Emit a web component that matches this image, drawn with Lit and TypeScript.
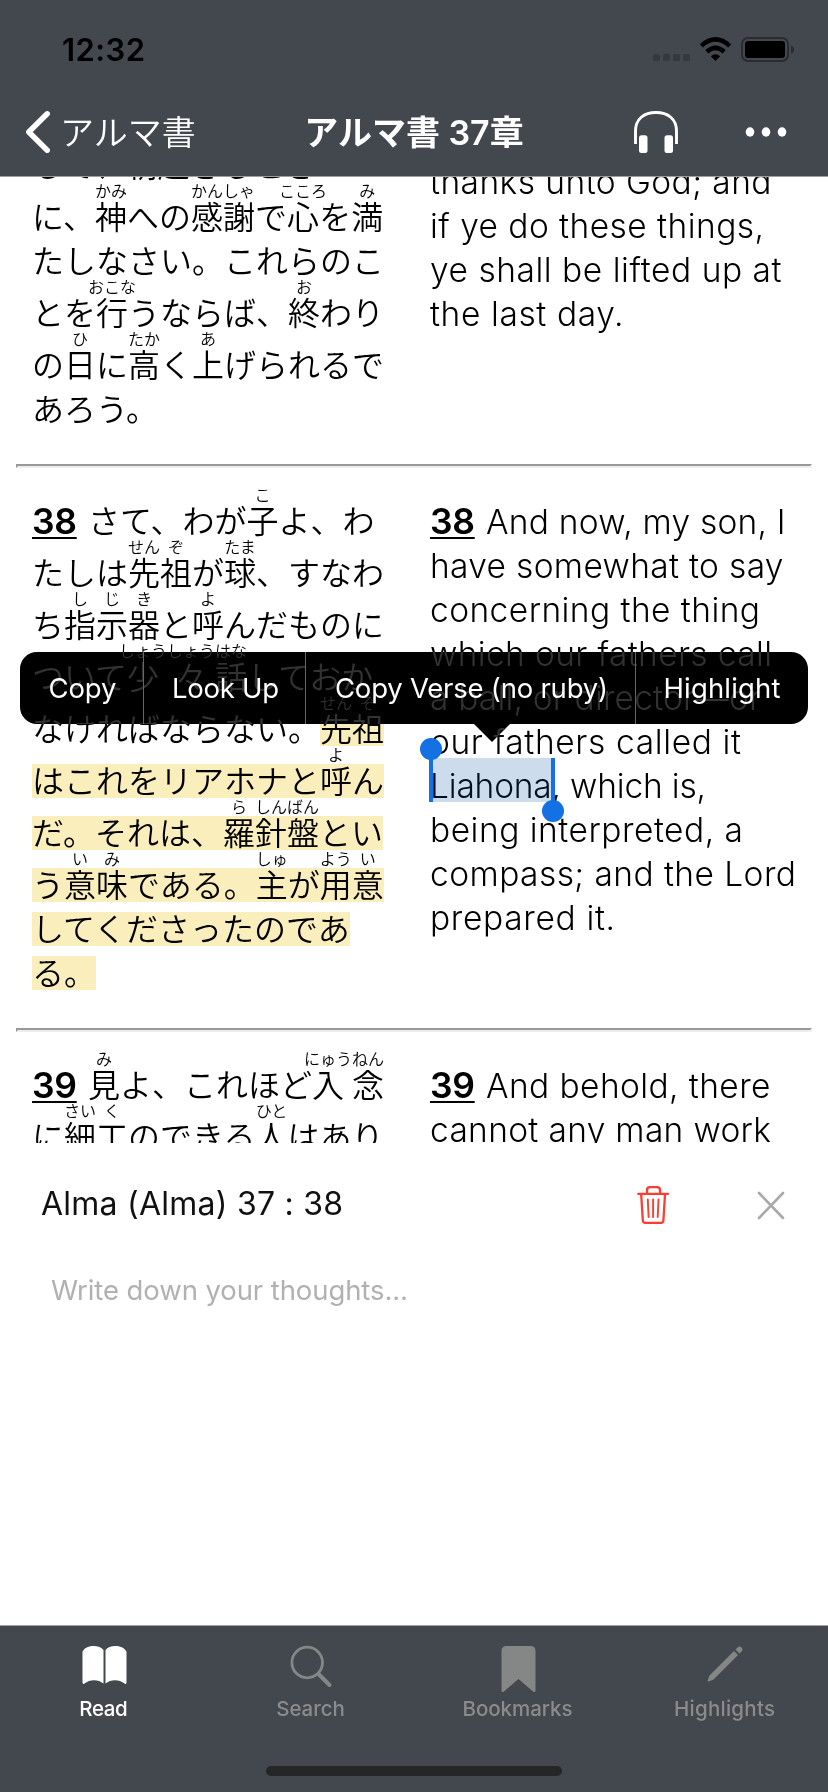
import { LitElement, html, css, svg, nothing } from "lit";
import { customElement, property, state } from "lit/decorators.js";
import { styleMap } from "lit/directives/style-map.js";
import { classMap } from "lit/directives/class-map.js";

/** One run of text tracked so that its advance equals a given measure. */
@customElement("tracked-text")
class TrackedText extends LitElement {
  @property() text = "";
  @property({ type: Number }) measure = 0;
  @state() private tracking = 0;

  static styles = css`
    :host { display: inline-block; white-space: pre; }
    .run { display: inline-block; }
  `;

  firstUpdated() {
    const run = this.renderRoot.querySelector(".run") as HTMLElement;
    const natural = run.getBoundingClientRect().width;
    this.tracking = (this.measure - natural) / Math.max(1, this.text.length - 1);
  }

  render() {
    return html`<span class="run" style=${styleMap({
      letterSpacing: `${this.tracking}px`,
      marginRight: `${-this.tracking}px`,
    })}>${this.text}</span>`;
  }
}

/** A segment of Japanese text: base, reading, and an optional wider cell. */
type Seg = { b: string; r?: string; wide?: "left" | "mid"; mark?: boolean };
type JpLine = { segs: Seg[]; plain?: boolean; num?: string };
type EnLine = { t: string; w: number; num?: string };
type Verse = { jp: JpLine[]; en: EnLine[]; offset?: boolean };

/** Parses "に、{神|かみ}へ" into segments. */
function line(src: string, opts: { plain?: boolean; num?: string; mark?: boolean } = {}): JpLine {
  const segs: Seg[] = [];
  let mark = !!opts.mark;
  for (const m of src.matchAll(/\{([^|}]+)\|([^|}]+)(?:\|(left|mid))?\}|(\[)|([^{}\[]+)/g)) {
    if (m[4]) mark = true;
    else if (m[1]) segs.push({ b: m[1], r: m[2], wide: m[3] as Seg["wide"], mark });
    else segs.push({ b: m[5], mark });
  }
  return { segs, plain: opts.plain, num: opts.num };
}

const VERSES: Verse[] = [
  {
    offset: true,
    jp: [
      line("して、朝起きるとき"),
      line("に、{神|かみ}への{感謝|かんしゃ}で{心|こころ}を{満|み}"),
      line("たしなさい。これらのこ", { plain: true }),
      line("とを{行|おこな}うならば、{終|お}わり"),
      line("の{日|ひ}に{高|たか}く{上|あ}げられるで"),
      line("あろう。", { plain: true }),
    ],
    en: [
      { t: "thanks unto God; and", w: 341.5 },
      { t: "if ye do these things,", w: 334 },
      { t: "ye shall be lifted up at", w: 351.5 },
      { t: "the last day.", w: 193.5 },
    ],
  },
  {
    jp: [
      line("さて、わが{子|こ}よ、わ", { num: "38" }),
      line("たしは{先|せん}{祖|ぞ}が{球|たま}、すなわ"),
      line("ち{指|し}{示|じ}{器|き}と{呼|よ}んだものに"),
      line("ついて{少|しょう|left}{々|しょう|mid}{話|はな}しておか"),
      line("なければならない。[{先|せん}{祖|ぞ}"),
      line("はこれをリアホナと{呼|よ}ん", { mark: true }),
      line("だ。それは、{羅|ら}{針盤|しんばん}とい", { mark: true }),
      line("う{意|い}{味|み}である。{主|しゅ}が{用|よう}{意|い}", { mark: true }),
      line("してくださったのであ", { plain: true, mark: true }),
      line("る。", { plain: true, mark: true }),
    ],
    en: [
      { t: "And now, my son, I", w: 299.5, num: "38" },
      { t: "have somewhat to say", w: 353.5 },
      { t: "concerning the thing", w: 330 },
      { t: "which our fathers call", w: 342 },
      { t: "a ball, or director—or", w: 331 },
      { t: "our fathers called it", w: 311 },
      { t: "Liahona, which is,", w: 276 },
      { t: "being interpreted, a", w: 313 },
      { t: "compass; and the Lord", w: 366 },
      { t: "prepared it.", w: 185 },
    ],
  },
  {
    jp: [
      line("{見|み}よ、これほど{入|にゅう|left}{念|ねん}", { num: "39" }),
      line("に{細|さい}{工|く}のできる{人|ひと}はあり"),
    ],
    en: [
      { t: "And behold, there", w: 284.5, num: "39" },
      { t: "cannot any man work", w: 341 },
    ],
  },
];

@customElement("verse-row")
class VerseRow extends LitElement {
  @property({ attribute: false }) verse!: Verse;

  static styles = css`
    :host { display: block; }
    .cols { display: grid; grid-template-columns: 398px 1fr; padding: 18px 0 38px 32px; color: #000; }
    .jp { font: 350 32px/30px "Noto Sans CJK JP", sans-serif; }
    .jline { display: flex; width: max-content; height: 52px; align-items: flex-end; }
    .jline.plain { height: 44px; }
    .seg { display: flex; flex-direction: column; align-items: center; width: max-content; }
    .base { height: 34px; white-space: pre; }
    .mark { background: #fbeebd; }
    .ruby { height: 18px; width: 0; display: flex; justify-content: center; white-space: pre; font-size: 16px; line-height: 16px; }
    .left { width: 40px; align-items: flex-start; }
    .left .ruby { width: 32px; }
    .mid { width: 48px; }
    .num { font: 600 35.5px/36px "Inter", sans-serif; width: 56px; height: 34px; }
    .num span, .en-num { text-decoration: underline; text-decoration-thickness: 2px; text-underline-offset: 3px; text-decoration-skip-ink: none; letter-spacing: -0.3px; }
    .num .digits { display: inline-block; line-height: 36px; }
    .en { padding-top: 14px; font: 300 33.5px/44px "Inter", sans-serif; }
    .en.offset { padding-top: 30px; }
    .eline { height: 44px; display: flex; align-items: baseline; white-space: pre; }
    .num-cell { width: 56px; }
    .en-num { font-weight: 600; font-size: 35.5px; }
    .rule { margin: 0 16px; height: 0; border: 2px solid; border-color: #999 #eee #eee #999; }
  `;

  render() {
    const v = this.verse;
    return html`
      <div class="cols">
        <div class="jp">
          ${v.jp.map((l) => html`<div class=${classMap({ jline: true, plain: !!l.plain })}>
            ${l.num ? html`<div class="num"><span class="digits">${l.num}</span></div>` : nothing}
            ${l.segs.map((s) => html`<div class=${classMap({ seg: true, left: s.wide === "left", mid: s.wide === "mid" })}>
              ${s.r ? html`<div class="ruby">${s.r}</div>` : nothing}
              <div class=${classMap({ base: true, mark: !!s.mark })}>${s.b}</div>
            </div>`)}
          </div>`)}
        </div>
        <div class=${classMap({ en: true, offset: !!v.offset })}>
          ${v.en.map((l) => html`<div class="eline">${l.num ? html`<div class="num-cell"><span class="en-num">${l.num}</span></div>` : nothing}<tracked-text .text=${l.t} .measure=${l.w}></tracked-text></div>`)}
        </div>
      </div>
      <div class="rule"></div>
    `;
  }
}

const ICONS = {
  read: svg`<path fill="#fff" d="M82 1651.500C86 1644.500 99 1644.500 103 1650V1683.500C98 1679 89 1679 84 1683.500Q82 1685 82 1682ZM105 1650C109 1644.500 122 1644.500 126 1651.500V1682Q126 1685 124 1683.500C119 1679 110 1679 105 1683.500Z"/>`,
  search: svg`<g fill="none" stroke="#858786"><circle cx="306.700" cy="1662.500" r="15.300" stroke-width="2.800"/><path d="M318 1674L329 1685" stroke-width="4" stroke-linecap="round"/></g>`,
  bookmarks: svg`<path fill="#858786" d="M501 1651Q501 1646 506 1646H530Q535 1646 535 1651V1690.500Q535 1693 532.500 1691.500L518 1679L503.500 1691.500Q501 1693 501 1690.500Z"/>`,
  highlights: svg`<path fill="#858786" d="M707 1681L709 1675.500L733.500 1651L737.500 1655L713 1679.500L708.500 1681.500ZM735 1649.500L737 1647.500Q739 1645.500 741 1647.500Q743 1649.500 741 1651.500L739 1653.500Z"/>`,
};

const TABS = [
  { id: "read", label: "Read", w: 48.5, box: "73.500 1640 60 56", on: true },
  { id: "search", label: "Search", w: 68.5, box: "280.500 1640 60 56" },
  { id: "bookmarks", label: "Bookmarks", w: 110, box: "487.500 1640 60 56" },
  { id: "highlights", label: "Highlights", w: 101, box: "694.500 1640 60 56" },
];

@customElement("app-root")
class AppRoot extends LitElement {
  static styles = css`
    :host { display: flex; flex-direction: column; width: 828px; height: 1792px; background: #fff; overflow: hidden; font-family: "Inter", sans-serif; }
    svg { display: block; }
    .head { height: 176px; flex: none; background: #43474e; border-bottom: 1px solid #9c9d9f; box-sizing: content-box; color: #fff; display: flex; flex-direction: column; }
    .status { height: 88px; display: flex; justify-content: space-between; align-items: center; padding: 12px 33px 0 62px; box-sizing: border-box; }
    .clock { color: #000; font-size: 31px; font-weight: 600; line-height: 40px; }
    .nav { height: 88px; display: grid; grid-template-columns: 224px 380px 224px; align-items: center; }
    .back { display: flex; align-items: center; padding-left: 24px; font: 350 34px/48px "Noto Sans CJK JP", sans-serif; gap: 8px; }
    .back span { margin-top: -2px; }
    .title { font: 600 34px/48px "Inter", "Noto Sans CJK JP", sans-serif; text-align: center; white-space: pre; padding-top: 1px; }
    .actions { display: flex; padding-left: 26px; gap: 63px; align-items: center; }
    .reader { height: 966px; flex: none; position: relative; overflow: hidden; }
    .scroll { margin-top: -65px; }
    .menu { position: absolute; left: 20px; top: 475px; width: 788px; height: 72px; border-radius: 17px; background: rgba(0,0,0,.01); backdrop-filter: grayscale(1) invert(1) brightness(.2); display: grid; grid-template-columns: 124px 162px 330px 1fr; color: #fff; font-size: 27.500px; font-weight: 400; }
    .item { display: flex; align-items: center; justify-content: center; border-right: 1px solid #666; padding-left: 2px; }
    .item:last-child { border: 0; padding-left: 0; }
    .tip { position: absolute; left: 474px; top: 547px; width: 36px; height: 18px; clip-path: polygon(0 0, 100% 0, 50% 100%); backdrop-filter: grayscale(1) invert(1) brightness(.2); }
    .sel { position: absolute; left: 431px; top: 581px; width: 122px; height: 44px; background: rgba(0, 82, 160, .2); }
    .grip { position: absolute; }
    .grip.start { left: 420px; top: 561px; }
    .grip.end { left: 542px; top: 581px; }
    .note { flex: 1; padding: 36px 43px 0 41px; }
    .note-head { display: flex; align-items: center; height: 52px; }
    .note-title { font-size: 32px; color: #111; flex: 1; line-height: 52px; margin-top: -2px; }
    .trash { margin-right: 87px; }
    .placeholder { margin: 39px 0 0 10px; font-size: 27.500px; line-height: 40px; color: #b1b1b1; }
    .tabs { height: 166px; flex: none; background: #43474e; border-top: 1px solid #a0a6a5; display: flex; flex-direction: column; align-items: center; }
    .row { display: grid; grid-template-columns: repeat(4, 207px); height: 140px; width: 828px; }
    .tab { display: flex; flex-direction: column; align-items: center; padding-top: 14px; color: #8b8b8c; font-size: 20.500px; font-weight: 500; line-height: 26px; }
    .tab.on { color: #fff; }
    .home { width: 296px; height: 10px; border-radius: 5px; background: #262626; }
  `;

  render() {
    return html`
      <header class="head">
        <div class="status">
          <span class="clock"><tracked-text .text=${"12:32"} .measure=${83}></tracked-text></span>
          <svg width="142" height="28" viewBox="653 36 142 28">
            <g fill="#35383d">
              <rect x="653" y="54" width="7" height="7" rx="2"/><rect x="663" y="54" width="7" height="7" rx="2"/>
              <rect x="673" y="54" width="7" height="7" rx="2"/><rect x="683" y="54" width="7" height="7" rx="2"/>
            </g>
            <g fill="none" stroke="#000" stroke-width="4.500">
              <path d="M701.300 45.800Q715.500 33 729.700 45.800"/><path d="M706.800 51.800Q715.500 44 724.200 51.800"/>
            </g>
            <path d="M710.800 56.200Q715.500 52.200 720.200 56.200L715.500 61Z"/>
            <rect x="742" y="38" width="46" height="23" rx="6" fill="none" stroke="#2a2c30" stroke-width="2"/>
            <rect x="745" y="41" width="40" height="17" rx="3"/>
            <path fill="#2a2c30" d="M791 45.500Q794 46.500 794 49.500Q794 52.500 791 53.500Z"/>
          </svg>
        </div>
        <div class="nav">
          <div class="back">
            <svg width="28" height="46" viewBox="24 109 28 46"><path d="M47.200 113.800L28.800 132L47.200 150.200" fill="none" stroke="#fff" stroke-width="5.500" stroke-linecap="round" stroke-linejoin="round"/></svg>
            <span>アルマ書</span>
          </div>
          <div class="title">アルマ書 37章</div>
          <div class="actions">
            <svg width="52" height="46" viewBox="630 108 52 46">
              <path d="M635.500 143V130C635.500 118 644 111.500 656 111.500S676.500 118 676.500 130V143" fill="none" stroke="#fff" stroke-width="2.900"/>
              <rect x="639" y="134.300" width="8.500" height="17.700" rx="2.500" fill="#fff"/><rect x="664.500" y="134.300" width="8.500" height="17.700" rx="2.500" fill="#fff"/>
            </svg>
            <svg width="42" height="12" viewBox="744 126 42 12" fill="#fff"><ellipse cx="749" cy="132" rx="4.300" ry="4.700"/><ellipse cx="765" cy="132" rx="4.300" ry="4.700"/><ellipse cx="781" cy="132" rx="4.300" ry="4.700"/></svg>
          </div>
        </div>
      </header>

      <main class="reader">
        <div class="scroll">${VERSES.map((v) => html`<verse-row .verse=${v}></verse-row>`)}</div>
        <div class="menu">
          <div class="item"><tracked-text .text=${"Copy"} .measure=${68}></tracked-text></div>
          <div class="item"><tracked-text .text=${"Look Up"} .measure=${107}></tracked-text></div>
          <div class="item"><tracked-text .text=${"Copy Verse (no ruby)"} .measure=${273}></tracked-text></div>
          <div class="item"><tracked-text .text=${"Highlight"} .measure=${117}></tracked-text></div>
        </div>
        <div class="tip"></div>
        <div class="sel"></div>
        <svg class="grip start" width="22" height="64" fill="#1471e3"><circle cx="11" cy="11" r="11"/><rect x="9" y="20" width="4" height="44"/></svg>
        <svg class="grip end" width="22" height="64" fill="#1471e3"><circle cx="11" cy="53" r="11"/><rect x="9" y="0" width="4" height="44"/></svg>
      </main>

      <section class="note">
        <div class="note-head">
          <div class="note-title"><tracked-text .text=${"Alma (Alma) 37 : 38"} .measure=${302}></tracked-text></div>
          <svg class="trash" width="34" height="40" viewBox="636 1185 34 40" fill="none" stroke="#fc3d30" stroke-width="2.300" stroke-linecap="round" stroke-linejoin="round">
            <path d="M638.200 1193.800H668M647 1193V1190Q647 1187.200 650 1187.200H657Q660 1187.200 660 1190V1193M641.200 1194.500L642.800 1220.500Q643 1222.800 645.300 1222.800H661Q663.200 1222.800 663.400 1220.500L665 1194.500"/>
            <path stroke-width="1.900" d="M647.800 1199.500L648.600 1217M653.100 1199.500V1217M658.500 1199.500L657.700 1217"/>
          </svg>
          <svg width="28" height="29" viewBox="756.500 1189.500 28 29"><path d="M758.500 1191.500L782.500 1216.500M782.500 1191.500L758.500 1216.500" stroke="#a9a9a9" stroke-width="2.600" stroke-linecap="round"/></svg>
        </div>
        <div class="placeholder"><tracked-text .text=${"Write down your thoughts..."} .measure=${357}></tracked-text></div>
      </section>

      <nav class="tabs">
        <div class="row">
          ${TABS.map((t) => html`<div class=${classMap({ tab: true, on: !!t.on })}>
            <svg width="60" height="56" viewBox=${t.box}>${ICONS[t.id as keyof typeof ICONS]}</svg>
            <tracked-text .text=${t.label} .measure=${t.w}></tracked-text>
          </div>`)}
        </div>
        <div class="home"></div>
      </nav>
    `;
  }
}
